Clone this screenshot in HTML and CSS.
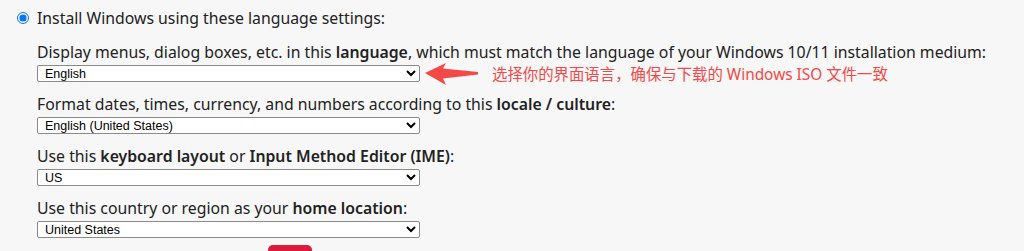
FILE: index.html
```html
<!DOCTYPE html>
<html lang="en">
<head>
    <meta charset="UTF-8">
    <meta name="viewport" content="width=device-width, initial-scale=1.0">
    <title>Language settings</title>
    <link rel="stylesheet" href="styles.css">
</head>
<body>
    <div class="panel">
        <label class="choice">
            <input type="radio" name="mode" checked>
            <span>Install Windows using these language settings:</span>
        </label>

        <div class="settings">
            <!-- Language -->
            <div class="group">
                <div class="caption">Display menus, dialog boxes, etc. in this <b>language</b>, which must match the language of your Windows 10/11 installation medium:</div>
                <div class="row">
                    <select class="field">
                        <option>English</option>
                    </select>
                    <svg class="arrow" width="56" height="24" viewBox="0 0 56 24">
                        <path d="M2 11 L23 1 L20 6.5 L55 10 L55 12.5 L20 16.5 L23 23 Z" fill="#f54848"/>
                    </svg>
                    <span class="note">选择你的界面语言，确保与下载的 Windows ISO 文件一致</span>
                </div>
            </div>

            <!-- Locale -->
            <div class="group">
                <div class="caption">Format dates, times, currency, and numbers according to this <b>locale / culture</b>:</div>
                <div class="row">
                    <select class="field">
                        <option>English (United States)</option>
                    </select>
                </div>
            </div>

            <!-- Keyboard -->
            <div class="group">
                <div class="caption">Use this <b>keyboard layout</b> or <b>Input Method Editor (IME)</b>:</div>
                <div class="row">
                    <select class="field">
                        <option>US</option>
                    </select>
                </div>
            </div>

            <!-- Home location -->
            <div class="group">
                <div class="caption">Use this country or region as your <b>home location</b>:</div>
                <div class="row">
                    <select class="field">
                        <option>United States</option>
                    </select>
                </div>
            </div>

            <div class="actions">
                <button class="btn" type="button" aria-label="Next"></button>
            </div>
        </div>
    </div>
</body>
</html>
```

FILE: styles.css
```css
body {
    font-family: 'Noto Sans', 'Open Sans', sans-serif;
    background-color: #f7f7f7;
    color: #222;
    margin: 0;
    padding: 0;
    overflow: hidden;
    height: 251px;
}

.panel {
    padding: 7px 0 0 17px;
}

.choice {
    display: flex;
    align-items: center;
    font-size: 15.8px;
    line-height: 22px;
}

.choice input {
    width: 12px;
    height: 12px;
    margin: 0 8px 0 0;
}

.settings {
    margin: 12px 0 0 20px;
}

.group {
    margin-bottom: 11px;
}

.caption {
    font-size: 15.8px;
    line-height: 22px;
}

.caption b {
    font-weight: 600;
}

.row {
    display: flex;
    align-items: center;
    height: 17px;
    margin-top: 2px;
}

.field {
    width: 383px;
    height: 17px;
    box-sizing: border-box;
    padding: 0 0 0 3px;
    font-family: 'Liberation Sans', Arial, sans-serif;
    font-size: 12.5px;
    color: #000;
    background-color: #fff;
    border: 1px solid #8a8a8a;
    border-radius: 2px;
}

.arrow {
    margin-left: 3px;
    flex-shrink: 0;
}

.note {
    margin-left: 13px;
    font-size: 15.4px;
    color: #f54848;
    white-space: nowrap;
    font-family: 'Noto Sans', 'Noto Sans CJK SC', sans-serif;
}

.actions {
    padding-left: 231px;
    margin-top: -4px;
}

.btn {
    width: 44px;
    height: 30px;
    border: none;
    border-radius: 5px;
    background-color: #dc1a3c;
}
```
